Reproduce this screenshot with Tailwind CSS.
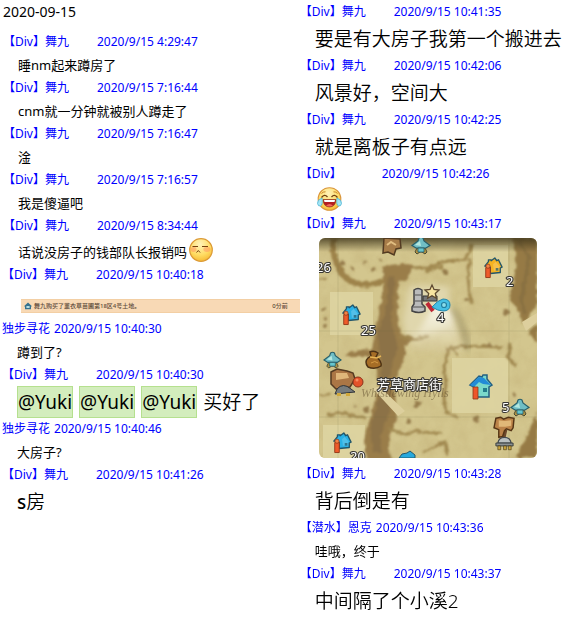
<!DOCTYPE html>
<html lang="zh-CN">
<head>
<meta charset="utf-8">
<meta name="viewport" content="width=device-width, initial-scale=1">
<title>聊天记录 2020-09-15</title>
<script src="https://cdn.jsdelivr.net/npm/@tailwindcss/browser@4"></script>
</head>
<body class="bg-white text-black font-['Noto_Sans','Noto_Sans_CJK_SC',sans-serif]">
<main class="grid grid-cols-[21fr_19fr] items-start pt-px">

<section class="min-w-0">
  <h1 class="mb-2 pl-[3px] text-sm leading-[22px]">2020-09-15</h1>
  <ol class="whitespace-nowrap text-[13px] leading-6">
    <li>
      <header class="flex gap-7 pl-[3px] text-xs leading-[22px] text-[#0000ff]"><span>【Div】舞九</span><time>2020/9/15 4:29:47</time></header>
      <p class="pl-[18px]">睡nm起来蹲房了</p>
    </li>
    <li>
      <header class="flex gap-7 pl-[3px] text-xs leading-[22px] text-[#0000ff]"><span>【Div】舞九</span><time>2020/9/15 7:16:44</time></header>
      <p class="pl-[18px]">cnm就一分钟就被别人蹲走了</p>
    </li>
    <li>
      <header class="flex gap-7 pl-[3px] text-xs leading-[22px] text-[#0000ff]"><span>【Div】舞九</span><time>2020/9/15 7:16:47</time></header>
      <p class="pl-[18px]">淦</p>
    </li>
    <li>
      <header class="flex gap-7 pl-[3px] text-xs leading-[22px] text-[#0000ff]"><span>【Div】舞九</span><time>2020/9/15 7:16:57</time></header>
      <p class="pl-[18px]">我是傻逼吧</p>
    </li>
    <li>
      <header class="flex gap-7 pl-[3px] text-xs leading-[22px] text-[#0000ff]"><span>【Div】舞九</span><time>2020/9/15 8:34:44</time></header>
      <p class="flex h-[27px] items-end gap-[2px] pl-[18px]">话说没房子的钱部队长报销吗
        <svg class="mb-[2px] size-6" viewBox="0 0 24 24" role="img" aria-label="不屑">
          <defs><radialGradient id="face" cx=".45" cy=".25" r=".8"><stop offset="0" stop-color="#fff3ba"/><stop offset=".6" stop-color="#ffdc62"/><stop offset="1" stop-color="#f5b52e"/></radialGradient></defs>
          <circle cx="12" cy="12" r="11.3" fill="url(#face)" stroke="#dc9a35" stroke-width="1.2"/>
          <ellipse cx="4.500" cy="11.500" rx="3" ry="2.400" fill="#ff8f60" opacity=".5"/><ellipse cx="18" cy="11.500" rx="3.600" ry="2.400" fill="#ff8f60" opacity=".5"/>
          <path d="M3.500 8.500h5.500M13 8.500h6M7.500 14.500l1.800-2 1.800 2" fill="none" stroke="#76410f" stroke-width="1"/>
        </svg>
      </p>
    </li>
    <li>
      <header class="flex gap-7 pl-[2px] text-xs leading-[22px] text-[#0000ff]"><span>【Div】舞九</span><time>2020/9/15 10:40:18</time></header>
      <div class="pt-[13px] pb-[5px] pl-[21px]">
        <div class="flex h-[14px] items-center border-y border-[#f3cfa4] bg-[#f8d9b5] pr-3 pl-[3px] text-[6px] leading-3 font-medium text-[#5e4b3a]">
          <svg class="mr-[2px] size-[8px]" viewBox="0 0 8 8"><path d="M0 4.2L4 .5l4 3.7-1 .4v2.6H1V4.6z" fill="#36728f"/><path d="M2.4 4h3.2v2H2.4z" fill="#b6dce0"/></svg>
          <span>舞九购买了薰衣草苗圃第18区4号土地。</span>
          <span class="ml-auto">0分前</span>
        </div>
      </div>
    </li>
    <li>
      <header class="flex gap-1 pl-[2px] text-xs leading-[22px] text-[#0000ff]"><span>独步寻花</span><time>2020/9/15 10:40:30</time></header>
      <p class="pl-[17px]">蹲到了?</p>
    </li>
    <li>
      <header class="flex gap-7 pl-[2px] text-xs leading-[22px] text-[#0000ff]"><span>【Div】舞九</span><time>2020/9/15 10:40:30</time></header>
      <p class="flex gap-[6px] pl-[17px] text-[19px] leading-[30px]">
        <span class="border border-[#b5e08f] bg-[#d3edbd]">@Yuki</span>
        <span class="border border-[#b5e08f] bg-[#d3edbd]">@Yuki</span>
        <span class="border border-[#b5e08f] bg-[#d3edbd]">@Yuki</span>
        <span class="leading-8 font-[350]">买好了</span>
      </p>
    </li>
    <li>
      <header class="flex gap-1 pl-[2px] text-xs leading-[22px] text-[#0000ff]"><span>独步寻花</span><time>2020/9/15 10:40:46</time></header>
      <p class="pl-[17px]">大房子?</p>
    </li>
    <li>
      <header class="flex gap-7 pl-[2px] text-xs leading-[22px] text-[#0000ff]"><span>【Div】舞九</span><time>2020/9/15 10:41:26</time></header>
      <p class="pl-[17px] text-[19px] leading-8"><span class="font-medium">s</span><span class="font-[350]">房</span></p>
    </li>
  </ol>
</section>

<ol class="min-w-0 whitespace-nowrap text-[13px] leading-6">
  <li>
    <header class="flex gap-7 text-xs leading-[22px] text-[#0000ff]"><span>【Div】舞九</span><time>2020/9/15 10:41:35</time></header>
    <p class="pl-[15px] text-[19px] leading-8 font-[350]">要是有大房子我第一个搬进去</p>
  </li>
  <li>
    <header class="flex gap-7 text-xs leading-[22px] text-[#0000ff]"><span>【Div】舞九</span><time>2020/9/15 10:42:06</time></header>
    <p class="pl-[15px] text-[19px] leading-8 font-[350]">风景好，空间大</p>
  </li>
  <li>
    <header class="flex gap-7 text-xs leading-[22px] text-[#0000ff]"><span>【Div】舞九</span><time>2020/9/15 10:42:25</time></header>
    <p class="pl-[15px] text-[19px] leading-8 font-[350]">就是离板子有点远</p>
  </li>
  <li>
    <header class="flex gap-10 text-xs leading-[22px] text-[#0000ff]"><span>【Div】</span><time>2020/9/15 10:42:26</time></header>
    <div class="flex h-7 items-center pl-[17px]">
      <svg class="h-6 w-[25px]" viewBox="0 0 25 24" role="img" aria-label="笑哭">
        <circle cx="12.5" cy="12" r="11.3" fill="url(#face)" stroke="#d9943a" stroke-width="1.1"/>
        <path d="M4.5 6.5Q6 4.600 8.500 4.800M16.500 4.800Q19 4.600 20.500 6.500" fill="none" stroke="#c98425" stroke-width="1"/>
        <path d="M4.500 10.500Q7.500 6.700 10.500 10M14.500 10Q17.500 6.700 20.500 10.500" fill="none" stroke="#70400f" stroke-width="1.300"/>
        <path d="M6 12.500H19Q18.500 20 12.500 20T6 12.500z" fill="#b41e20" stroke="#85381b" stroke-width=".6"/>
        <path d="M7 13H18L17.500 15H7.500z" fill="#fff"/><path d="M9 18.500Q12.500 15.500 16 18.500Q12.500 20.500 9 18.500z" fill="#f2645b"/>
        <path d="M5 11Q0 13 .5 16.500Q1 19.500 3.500 19Q6 18 5 11zM20 11Q25 13 24.500 16.500Q24 19.500 21.500 19Q19 18 20 11z" fill="#a5e6f5" stroke="#4bb2d3" stroke-width=".8"/>
      </svg>
    </div>
  </li>
  <li>
    <header class="flex gap-7 text-xs leading-[22px] text-[#0000ff]"><span>【Div】舞九</span><time>2020/9/15 10:43:17</time></header>
    <figure class="pt-[3px] pb-[5px] pl-[19px]">
      <svg class="h-[220px] w-[218px] rounded-md" viewBox="0 0 218 220" role="img" aria-label="芳草商店街地图">
        <defs>
          <filter id="grain" x="0" y="0" width="100%" height="100%"><feTurbulence type="fractalNoise" baseFrequency=".06" numOctaves="4" seed="8"/><feColorMatrix values="0 0 0 0 .50  0 0 0 0 .39  0 0 0 0 .16  0 1.600 0 0 -.62"/></filter>
          <filter id="rough" x="-5%" y="-5%" width="110%" height="110%"><feTurbulence type="fractalNoise" baseFrequency=".18" numOctaves="2" seed="3" result="n"/><feDisplacementMap in="SourceGraphic" in2="n" scale="5" xChannelSelector="R" yChannelSelector="G"/><feGaussianBlur stdDeviation=".8"/></filter>
          <filter id="soft"><feGaussianBlur stdDeviation=".5"/></filter>
          <filter id="haze" x="-20%" y="-20%" width="140%" height="140%"><feGaussianBlur stdDeviation="3"/></filter>
          <linearGradient id="top" x2="0" y2="1"><stop offset="0" stop-color="#3c3319" stop-opacity=".8"/><stop offset="1" stop-color="#3c3319" stop-opacity="0"/></linearGradient>
          <linearGradient id="cone" x2="0" y2="1"><stop offset="0" stop-color="#fff" stop-opacity=".85"/><stop offset="1" stop-color="#f4edcf" stop-opacity=".1"/></linearGradient>
          <symbol id="house" viewBox="0 0 22 24" overflow="visible">
            <path d="M2 10L6 5V3h3v1l4-3 2 3 2-1 4 8-2 1v5l-11 1V11z" fill="currentColor" stroke="#24566a" stroke-width="1.500" stroke-linejoin="round"/>
            <path d="M11 8l3-3 4 5v5h-6z" fill="#fff" opacity=".18"/>
            <path d="M14 12h3v3h-3z" fill="#245f74" opacity=".75"/>
            <path d="M3 11.500h5v11H3z" fill="#ef5a2c" stroke="#923517" stroke-width="1"/><circle cx="5.500" cy="10" r="2.300" fill="#f48245" stroke="#8a3a1c" stroke-width=".8"/>
          </symbol>
          <symbol id="lamp" viewBox="0 0 18 18" overflow="visible">
            <path d="M5 11l-2 4 2 2 3-2h2l3 2 2-2-2-4z" fill="#ae9143" stroke="#4b4c32"/>
            <path d="M0 8.500L6 4 7 1q2-1.500 4 0l1 3 6 4.500-4 2.500H4z" fill="#70bec5" stroke="#285e69" stroke-width="1.200"/>
            <path d="M3 8l5-4 1 5z" fill="#b5e8df"/><path d="M6 11h6v4H6z" fill="#66c6ce" stroke="#285e69" stroke-width=".8"/>
          </symbol>
          <symbol id="stall" viewBox="0 0 22 36" overflow="visible">
            <path d="M8 14h6l-2 9H7z" fill="#6d482d"/>
            <path d="M2 2l5-1 3 2 5-2 6 1-1 10-2 3-5-2-2 2-2 6-4 1 0-8-5-2z" fill="#bb8348" stroke="#553516" stroke-width="1.500"/>
            <path d="M5 4l6 1 7-1v6l-6 1-7 0z" fill="#e1b878"/>
            <path d="M4 28q1-6 7-6t7 6z" fill="#bac0c0" stroke="#454b4f" stroke-width="1.300"/><path d="M2 28h18v3H2z" fill="#8b9192" stroke="#383d3d"/>
            <path d="M4 31h3v4H4zM10 31h3v4h-3zM15 31h3v4h-3z" fill="#caa43c" stroke="#4b3d1d" stroke-width=".7"/>
          </symbol>
        </defs>
        <path d="M0 0h218v220H0z" fill="#d3c68e"/>
        <path d="M0 0h218v220H0z" filter="url(#grain)" opacity=".35"/>
        <g fill="#dfd5a3" opacity=".85" filter="url(#soft)"><path d="M11 54h43v43H11zM154 7h35v42h-35zM133 120h56v55h-56zM4 187h42v33H4z"/></g>
        <path d="M90 48h40v40l-42 16-4-20z" fill="#e0d7ad" filter="url(#haze)"/>
        <g filter="url(#rough)">
          <path d="M15 0q-3 12 3 26q5 14 16 18q13 6 30-1" fill="none" stroke="#9d824a" stroke-width="6"/>
          <path d="M64 29q14-5 30-2l-4 12-11 6v32l2 19 15 4-10 8 0 10-3 8q-7 14-7 28l2 28-7 15-2 13 6 20H50l-5-26 5-20 7-26 2-22-6-17-28 0q5-7 28-8l6-34 5-22z" fill="#9a7d48"/>
          <path d="M70 38l6 2-4 42 7 28-10 32 2 31-9 22 0 20h-8l-3-24 10-37 2-28-5-30 8-20z" fill="#836b47" opacity=".6"/>
          <path d="M194 0h24v66l-8 12-5 7-15-28 5-14 2-20zM209 95l9-9v18zM218 174v46h-22l10-18z" fill="#967a45"/>
          <path d="M200 4l10 15-4 26-4 18 4 13" fill="none" stroke="#7c673f" stroke-width="4" opacity=".5"/>
          <g fill="none" stroke="#a08850">
            <path d="M92 30l18-1 18-6 19-2 6-15M151 20l-2 20 3 25M107 33l18-5" stroke-width="3"/>
            <path d="M127 111l20-3 36 1M130 111l-5 17 2 18-2 14 2 15M191 105l-2 14 8 9" stroke-width="3"/>
            <path d="M8 177l17-2 12 4 10 0M69 190l15 6 15-3 12 3M106 195h17M104 215l22-12 2 14M0 158l12-2" stroke-width="2.500"/>
            <path d="M0 42h7M79 99l18 2 12-2M126 174l12 5M130 109q9 3 8 9" stroke-width="2"/>
          </g>
          <g fill="#957b4b"><circle cx="23" cy="25" r="2.500"/><circle cx="34" cy="30" r="2"/><circle cx="45" cy="25" r="1.500"/><circle cx="54" cy="31" r="2"/><circle cx="62" cy="22" r="2"/><circle cx="126" cy="34" r="3"/><circle cx="187" cy="74" r="3"/><circle cx="148" cy="62" r="2"/><circle cx="170" cy="107" r="2"/><circle cx="5" cy="71" r="2"/><circle cx="7" cy="80" r="2"/><circle cx="6" cy="88" r="2"/><circle cx="98" cy="166" r="3"/><circle cx="90" cy="183" r="2"/><circle cx="157" cy="181" r="3"/><circle cx="47" cy="171" r="3"/><circle cx="36" cy="168" r="1.500"/><circle cx="195" cy="157" r="2"/></g>
        </g>
        <path d="M54 151l6-3 26 25-7 5zM203 84l15-9v9l-11 9z" fill="#ddcf9d" filter="url(#soft)"/>
        <path d="M116 66L88 112l58 4-13-42z" fill="url(#cone)" filter="url(#haze)"/>
        <path d="M134 70q12 20 15 42" fill="none" stroke="#6f6746" stroke-width="5" opacity=".45" filter="url(#haze)"/>
        <path d="M19 0v220M190 0v220M0 93h218M0 179h218" stroke="#6e704f" stroke-width="1" opacity=".15"/>
        <path d="M0 0h218v14H0z" fill="url(#top)"/>
        <g filter="url(#soft)">
          <path d="M65 0l16 1 1 9-5 1-2 6-6-3-5 1z" fill="#a77b48" stroke="#523b22" stroke-width="1.500"/><path d="M68 7l4-3 5 3" stroke="#e1bd81" stroke-width="2" fill="none"/>
          <use href="#lamp" x="93" y="-1" width="18" height="18"/>
          <use href="#lamp" x="5" y="114" width="17" height="17"/>
          <use href="#lamp" x="192" y="161" width="18" height="18"/>
          <use href="#house" x="22" y="66" width="20" height="22" color="#2cb1e4"/>
          <use href="#house" x="164" y="19" width="20" height="22" color="#f4b321"/>
          <use href="#house" x="13" y="194" width="20" height="22" color="#29b1e5"/>
          <g><path d="M151 147l9-9 3 1 1-2h4v4l5 6-3 2v10h-15V149z" fill="#7ad9cb" stroke="#245f83" stroke-width="1.500"/><path d="M151 147l9-8 5 1 7 7-8-1-4-2-5 5z" fill="#238bd7"/><path d="M164 150h4v4h-4z" fill="#237b8b"/><path d="M154 149h5v12h-5z" fill="#ee562a" stroke="#8b381b" stroke-width=".8"/></g>
          <path d="M80 220l3-4 5-1 3-2 5 4 0 3z" fill="#25a9de" stroke="#24566a"/>
          <path d="M49 120l3-2-1-4q4-2 8 1l-2 4q6 4 5 9-6 4-13 1-4-5 0-9z" fill="#a66d26" stroke="#4e3315" stroke-width="1.500"/><path d="M51 119l7 1 4-2" stroke="#e8b657" stroke-width="1.500" fill="none"/><path d="M52 125q4-3 7 0" stroke="#d59b45" fill="none"/>
          <use href="#stall" x="175" y="178" width="21" height="35"/>
          <path d="M12 134l6-3 10 2 6 2 2 6-5 8-14 2-5-5z" fill="#ab7645" stroke="#543a22" stroke-width="1.500"/><path d="M17 135l11 0 2 5-13 2z" fill="#dfb67a"/><path d="M18 151q6-7 14 0l4 3-20 2z" fill="#777b7d" stroke="#303438"/><path d="M18 155h4v3h-4zM27 155h4v3h-4z" fill="#d0a83b"/><circle cx="39" cy="144" r="5" fill="#e3532a" stroke="#8a331b"/><circle cx="38" cy="142" r="1.500" fill="#f88c61"/>
          <path d="M95 52q4-3 8 0v14l3 3v4q-6 3-13 0v-4l2-3z" fill="#babbbb" stroke="#444" stroke-width="1.500"/><path d="M96 57h7M96 63h7M94 69h11" stroke="#555" stroke-width="1.200"/><path d="M104 58h14v5h-14z" fill="#777" stroke="#353535"/>
          <path d="M108 65l6 8" stroke="#be2835" stroke-width="4"/>
          <path d="M113 47l2 4.500 5 .5-3.700 3.400 1.100 4.900-4.400-2.600-4.400 2.600 1.100-4.900-3.700-3.400 5-.5z" fill="#f7e4a0" stroke="#5d4930" stroke-width="1.300"/>
          <path d="M113 69q6-7 11-8q7 0 7 6t-7 6q-5 0-11-4z" fill="#45bfe4" stroke="#2384a8"/><circle cx="125" cy="67" r="2.500" fill="#8bddea" stroke="#247fa0" stroke-width="1.200"/>
        </g>
        <text x="42" y="159" font-size="12" font-family="Liberation Serif" font-style="italic" fill="#5e4b2b" opacity=".5">Whistlewing Hylls</text>
        <g fill="#fff" stroke="#3a3834" stroke-width="2.200" paint-order="stroke" stroke-linejoin="round" font-size="13" class="font-['Noto_Sans','Noto_Sans_CJK_SC',sans-serif]">
          <text x="-3" y="34">26</text><text x="42" y="97">25</text><text x="187" y="48">2</text><text x="118" y="84">4</text><text x="183" y="174">5</text><text x="31" y="223">20</text>
          <text x="58" y="151">芳草商店街</text>
        </g>
      </svg>
    </figure>
  </li>
  <li>
    <header class="flex gap-7 text-xs leading-[22px] text-[#0000ff]"><span>【Div】舞九</span><time>2020/9/15 10:43:28</time></header>
    <p class="pl-[15px] text-[19px] leading-8 font-[350]">背后倒是有</p>
  </li>
  <li>
    <header class="flex gap-1 text-xs leading-[22px] text-[#0000ff]"><span>【潜水】恩克</span><time>2020/9/15 10:43:36</time></header>
    <p class="pl-[15px]">哇哦，终于</p>
  </li>
  <li>
    <header class="flex gap-7 text-xs leading-[22px] text-[#0000ff]"><span>【Div】舞九</span><time>2020/9/15 10:43:37</time></header>
    <p class="pl-[15px] text-[19px] leading-8 font-[350]">中间隔了个小溪2</p>
  </li>
</ol>
</main>
</body>
</html>
